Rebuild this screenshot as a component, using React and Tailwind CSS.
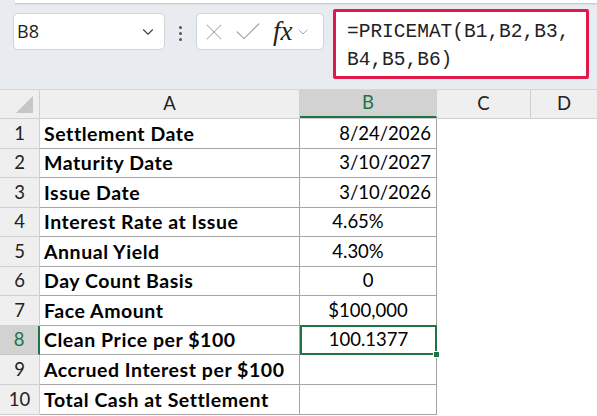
import { ChevronDown, X, Check } from 'lucide-react';

const rows = [
  { label: 'Settlement Date', value: '8/24/2026', align: 'right', h: 'h-[30px]' },
  { label: 'Maturity Date', value: '3/10/2027', align: 'right', h: 'h-[29px]' },
  { label: 'Issue Date', value: '3/10/2026', align: 'right', h: 'h-[30px]' },
  { label: 'Interest Rate at Issue', value: '4.65%', align: 'pct', h: 'h-[29px]' },
  { label: 'Annual Yield', value: '4.30%', align: 'pct', h: 'h-[30px]' },
  { label: 'Day Count Basis', value: '0', align: 'center', h: 'h-[29px]' },
  { label: 'Face Amount', value: '$100,000', align: 'center', h: 'h-[30px]' },
  { label: 'Clean Price per $100', value: '100.1377', align: 'center', h: 'h-[29px]', selected: true },
  { label: 'Accrued Interest per $100', value: '', align: 'center', h: 'h-[30px]' },
  { label: 'Total Cash at Settlement', value: '', align: 'center', h: 'h-[30px]' },
];

const alignClass = {
  right: 'justify-end pr-[5px]',
  center: 'justify-center',
  pct: 'justify-center pr-[20px]',
};

function FormulaBar() {
  return (
    <div className="relative h-[90px] bg-[#e8ebef] border-b border-[#d6d6d6]">
      {/* ribbon edge peeking in at the top */}
      <div className="absolute left-[15px] right-0 top-0 h-[3px] bg-white shadow-[0_1px_2px_rgba(0,0,0,0.18)]" />

      <div className="flex items-start pt-[13px] pl-[13px]">
        {/* name box */}
        <div className="flex items-center justify-between w-[152px] h-[37px] bg-white border border-[#d0d4d8] rounded-[5px] pl-[3px] pr-[7px]">
          <span className="text-[18px] text-[#222]" style={{ fontFamily: '"Open Sans", sans-serif' }}>B8</span>
          <ChevronDown size={18} strokeWidth={1.5} className="text-[#444]" />
        </div>

        <div className="flex flex-col gap-[3px] w-[31px] items-center pt-[13px]">
          <span className="w-[3px] h-[3px] bg-[#555] rounded-full" />
          <span className="w-[3px] h-[3px] bg-[#555] rounded-full" />
          <span className="w-[3px] h-[3px] bg-[#555] rounded-full" />
        </div>

        {/* cancel / enter / insert function */}
        <div className="flex items-center w-[128px] h-[37px] bg-white border border-[#d0d4d8] rounded-[5px] pl-[3px]">
          <X size={28} strokeWidth={0.9} className="text-[#a8a8a8]" />
          <Check size={32} strokeWidth={0.9} className="text-[#a8a8a8] ml-[4px]" />
          <span
            className="ml-[9px] text-[27px] italic text-[#222] leading-none"
            style={{ fontFamily: '"Liberation Serif", serif' }}
          >
            fx
          </span>
          <ChevronDown size={16} strokeWidth={1.3} className="text-[#999] ml-[2px]" />
        </div>

        {/* formula input */}
        <div className="ml-[9px] -mt-[4px] w-[256px] h-[70px] bg-white border-[3px] border-[#e0194b] rounded-[2px] pl-[11px] pt-[6px]">
          <div
            className="text-[19.5px] leading-[28px] text-[#222]"
            style={{ fontFamily: '"Liberation Mono", monospace' }}
          >
            =PRICEMAT(B1,B2,B3,
            <br />
            B4,B5,B6)
          </div>
        </div>
      </div>
    </div>
  );
}

function Sheet() {
  const font = { fontFamily: 'Lato, "Liberation Sans", sans-serif' };
  return (
    <div className="text-[18.5px] text-black" style={font}>
      {/* column headers */}
      <div className="flex h-[29px] bg-[#efefef] border-b border-[#d0d0d0]">
        <div className="relative w-[40px] border-r border-[#d0d0d0]">
          <div className="absolute right-[6px] bottom-[5px] w-0 h-0 border-l-[17px] border-l-transparent border-b-[17px] border-b-[#c6c6c6]" />
        </div>
        <div className="w-[260px] flex items-center justify-center border-r border-[#d0d0d0] text-[#222]">A</div>
        <div className="w-[137px] flex items-center justify-center bg-[#d2d2d2] text-[#217346] border-r border-[#d0d0d0] border-b-2 border-b-[#217346]">B</div>
        <div className="w-[94px] flex items-center justify-center border-r border-[#d0d0d0] text-[#222]">C</div>
        <div className="flex-1 flex items-center justify-center text-[#222]">D</div>
      </div>

      {rows.map((r, i) => (
        <div key={i} className={`flex ${r.h}`}>
          <div
            className={
              r.selected
                ? 'w-[40px] flex items-center justify-center bg-[#d2d2d2] text-[#217346] border-b border-[#c8c8c8] border-r-2 border-r-[#217346]'
                : 'w-[40px] flex items-center justify-center bg-[#efefef] text-[#222] border-b border-[#d0d0d0] border-r border-r-[#d0d0d0]'
            }
          >
            {i + 1}
          </div>
          <div className="w-[260px] flex items-center pl-[4px] font-bold text-[19.5px] tracking-[0.55px] border-r border-b border-[#a6a6a6]">
            {r.label}
          </div>
          <div
            className={
              r.selected
                ? `relative w-[137px] -mt-px h-[calc(100%+1px)] flex items-center border-2 border-[#217346] ${alignClass[r.align]}`
                : `w-[137px] flex items-center border-r border-b border-[#a6a6a6] ${alignClass[r.align]}`
            }
          >
            {r.value}
            {r.selected && (
              <span className="absolute -right-[5px] -bottom-[5px] w-[7px] h-[7px] bg-[#217346] border border-white" />
            )}
          </div>
          <div className="flex-1 bg-white" />
        </div>
      ))}
    </div>
  );
}

export default function App() {
  return (
    <div className="w-[597px] h-[416px] overflow-hidden bg-white">
      <FormulaBar />
      <Sheet />
    </div>
  );
}
